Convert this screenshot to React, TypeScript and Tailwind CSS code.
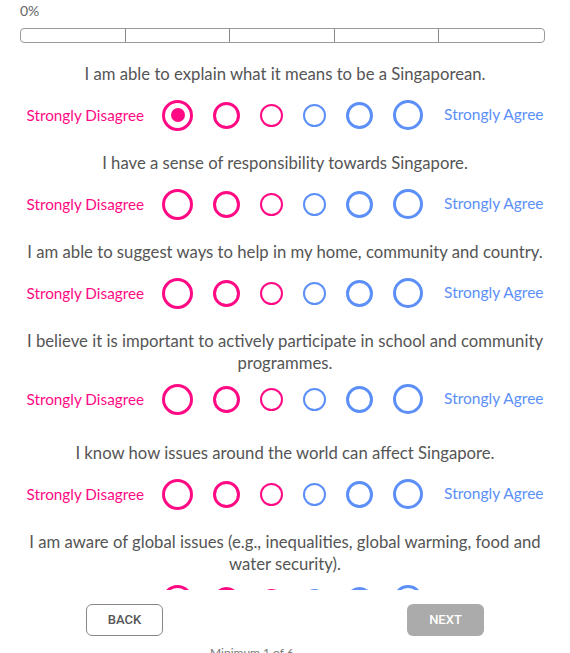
const questions = [
  { text: 'I am able to explain what it means to be a Singaporean.', selected: 0, wraps: false },
  { text: 'I have a sense of responsibility towards Singapore.', selected: -1, wraps: false },
  { text: 'I am able to suggest ways to help in my home, community and country.', selected: -1, wraps: false },
  { text: 'I believe it is important to actively participate in school and community programmes.', selected: -1, wraps: true },
  { text: 'I know how issues around the world can affect Singapore.', selected: -1, wraps: false },
  { text: 'I am aware of global issues (e.g., inequalities, global warming, food and water security).', selected: -1, wraps: true }
]

const options = [
  { size: 'h-[31px] w-[31px] border-[3px] border-[#ff0a84]', dot: 'bg-[#ff0a84]' },
  { size: 'h-[27px] w-[27px] border-[3px] border-[#ff0a84]', dot: 'bg-[#ff0a84]' },
  { size: 'h-[23px] w-[23px] border-[2.5px] border-[#ff0a84]', dot: 'bg-[#ff0a84]' },
  { size: 'h-[23px] w-[23px] border-[2.5px] border-[#5c8ff7]', dot: 'bg-[#5c8ff7]' },
  { size: 'h-[27px] w-[27px] border-[3px] border-[#5c8ff7]', dot: 'bg-[#5c8ff7]' },
  { size: 'h-[30px] w-[30px] border-[3px] border-[#5c8ff7]', dot: 'bg-[#5c8ff7]' }
]

function ScaleRow({ selected, wraps }: { selected: number; wraps: boolean }) {
  return (
    <div className={`flex h-[30px] items-center justify-center ${wraps ? 'mt-[10px]' : 'mt-[15px]'}`}>
      <span className="mr-[18px] text-[15.3px] text-[#ff0a84]">Strongly Disagree</span>
      <div className="flex items-center gap-[20px]">
        {options.map((opt, i) => (
          <span key={i} className={`flex items-center justify-center rounded-full bg-white ${opt.size}`}>
            {selected === i && <span className={`h-[14px] w-[14px] rounded-full ${opt.dot}`} />}
          </span>
        ))}
      </div>
      <span className="ml-[21px] text-[15.5px] text-[#5c8ff7]">Strongly Agree</span>
    </div>
  )
}

export default function App() {
  return (
    <div className="flex h-[653px] w-[570px] flex-col overflow-hidden bg-white font-['Lato',sans-serif]">
      <div className="shrink-0 pl-5 pr-[25px]">
        <p className="pt-[2px] text-[14px] leading-[18px] text-[#666]">0%</p>
        <div className="mt-[8px] grid h-[15px] grid-cols-5 rounded-[4px] border border-[#999]">
          <div className="border-r border-[#888]" />
          <div className="border-r border-[#888]" />
          <div className="border-r border-[#888]" />
          <div className="border-r border-[#888]" />
          <div />
        </div>
      </div>

      <div className="h-[547px] shrink-0 overflow-hidden px-[20px] pt-[20px]">
        {questions.map((q) => (
          <div key={q.text} className={`mb-[22px] ${q.wraps ? 'pb-[6px]' : ''}`}>
            <p className="text-center text-[16.7px] leading-[22px] text-[#555]">{q.text}</p>
            <ScaleRow selected={q.selected} wraps={q.wraps} />
          </div>
        ))}
      </div>

      <div className="mt-[14px] flex shrink-0 items-center justify-between pl-[86px] pr-[86px] font-['Roboto',sans-serif]">
        <button className="h-[32px] w-[77px] rounded-[6px] border border-[#888] bg-white text-[13px] font-medium text-[#555]">
          BACK
        </button>
        <button className="h-[32px] w-[77px] rounded-[6px] bg-[#ababab] text-[13px] font-medium text-white">
          NEXT
        </button>
      </div>
      <p className="mt-[9px] shrink-0 pl-[210px] text-[12px] leading-[16px] text-[#777]">Minimum 1 of 6</p>
    </div>
  )
}
